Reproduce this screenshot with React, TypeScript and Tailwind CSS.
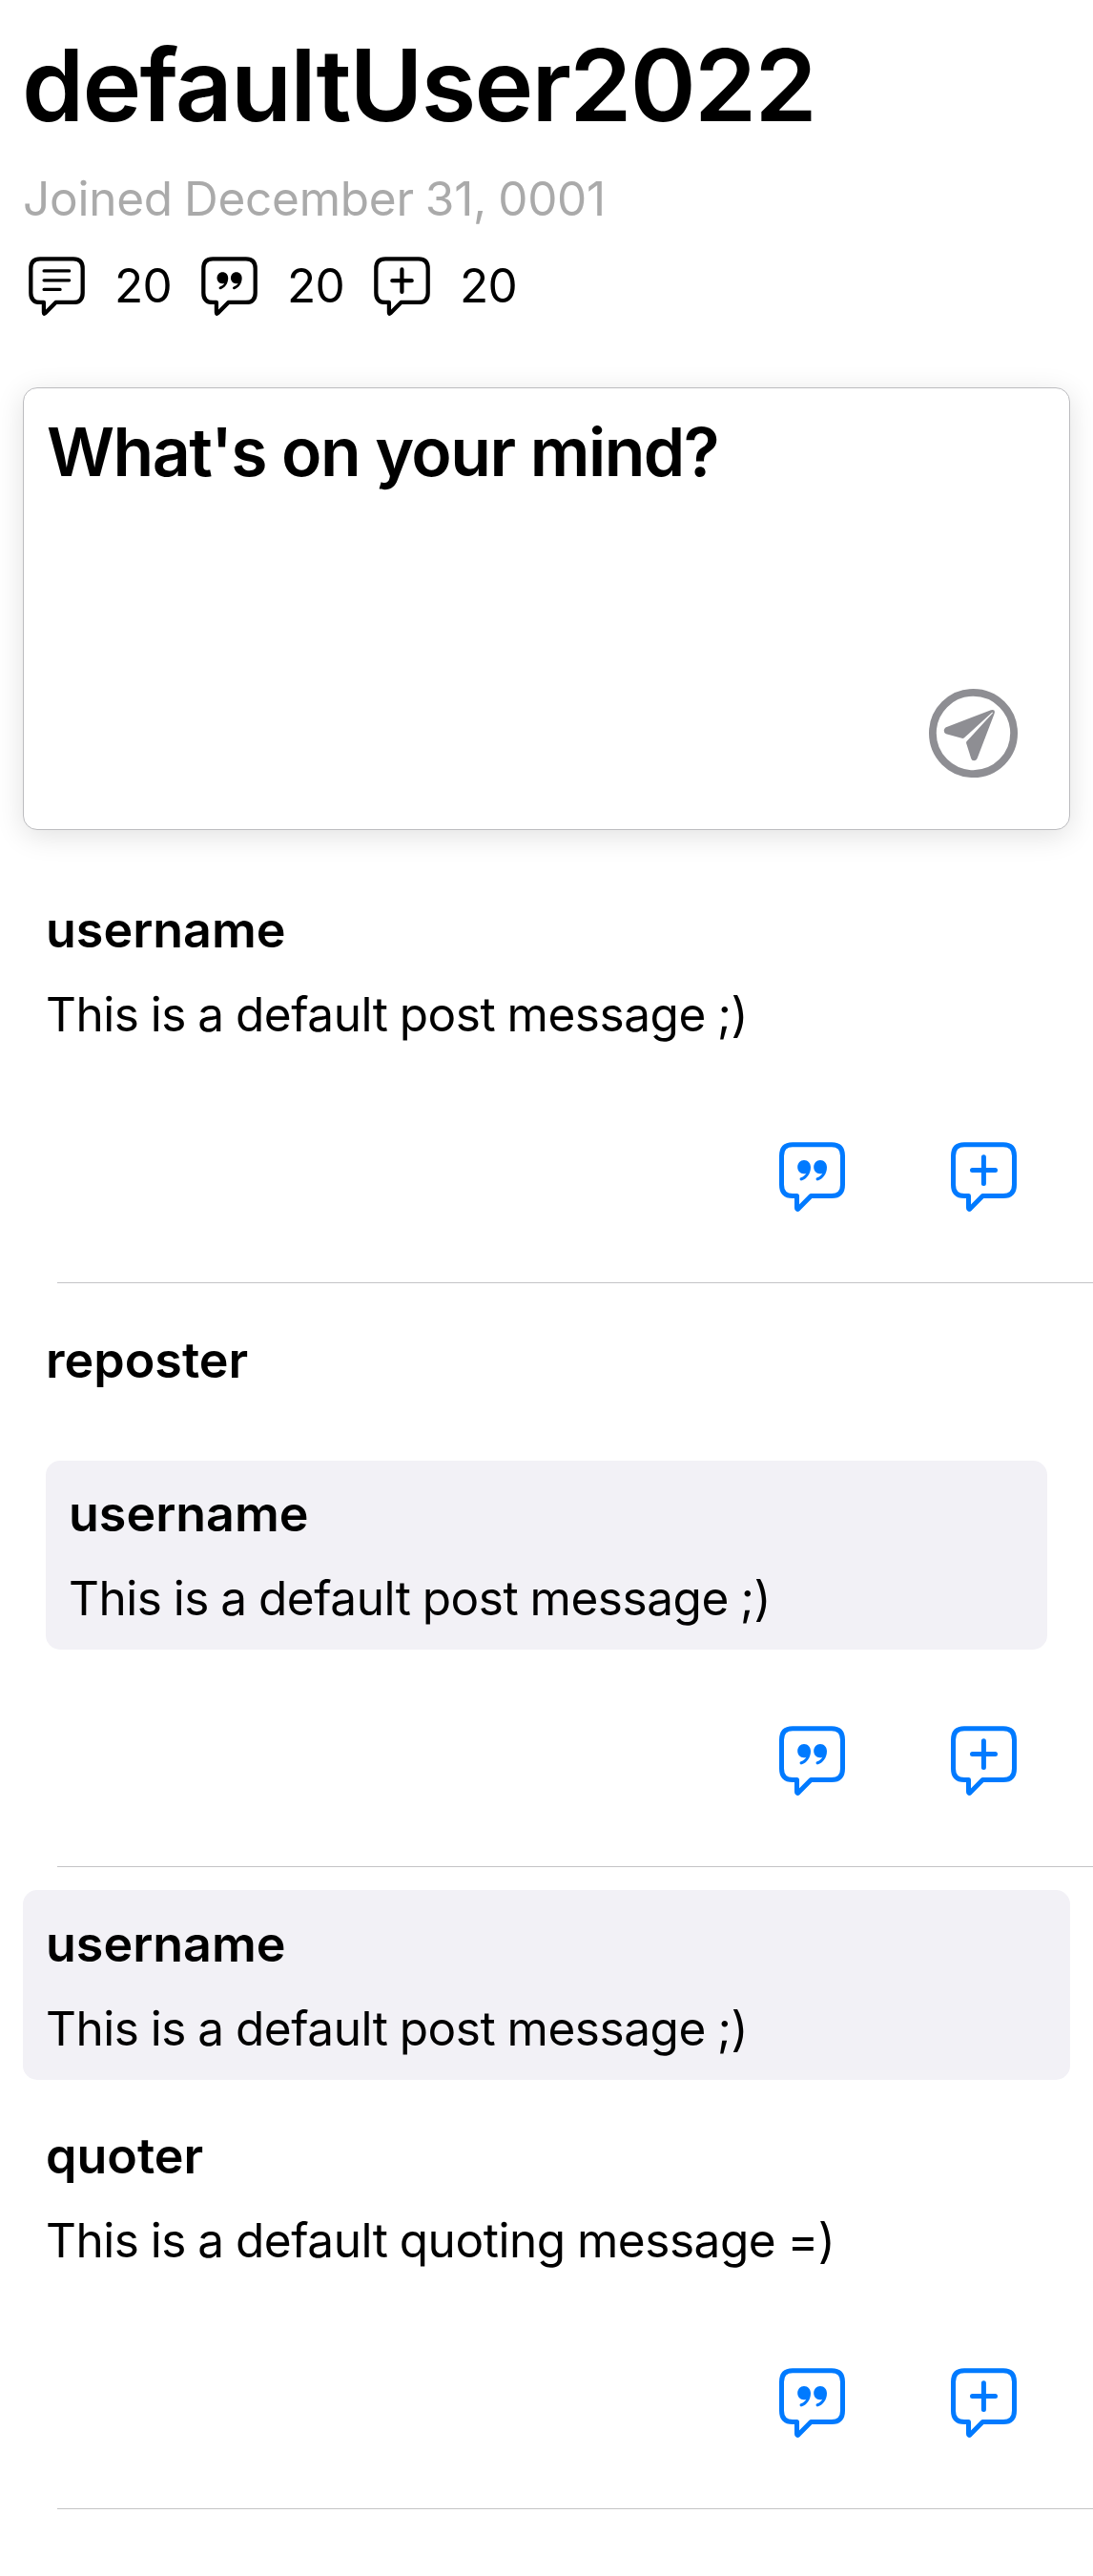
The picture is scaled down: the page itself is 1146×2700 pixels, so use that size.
import React from 'react';

type IconKind = 'text' | 'quote' | 'plus';

function Bubble({ kind, className }: { kind: IconKind; className: string }) {
  return (
    <svg
      viewBox="0 0 69 73"
      className={className}
      fill="none"
      stroke="currentColor"
      strokeWidth="5"
      strokeLinecap="round"
      strokeLinejoin="round"
    >
      <path d="M14 2.7H55Q66.5 2.7 66.5 14.5V44.700Q66.500 56.500 55 56.500H33.300L20.200 69.800Q18.500 71.300 18.500 69V56.500H14Q2.500 56.500 2.500 44.700V14.500Q2.500 2.700 14 2.700Z" />
      {kind === 'text' && <path strokeWidth="3.8" d="M18.7 17.6H50M18.7 29.2H50M18.7 40.6H38.7" />}
      {kind === 'plus' && <path d="M34.4 15.8V43.5M22.500 29.6H46.5" />}
      {kind === 'quote' && (
        <g fill="currentColor" stroke="none">
          <path d="M26 19c4.200 0 7 3.200 7 7.600 0 6.800-4.300 12.200-9.300 13.700-2.200.6-3-2.300-.9-3.100 2.600-1 4.700-2.600 5.500-4.500-.7.4-1.600.6-2.600.6-3.700 0-6.500-3-6.500-7 0-4.200 3-7.300 6.800-7.300Z" />
          <path d="M43 19c4.200 0 7 3.200 7 7.600 0 6.800-4.300 12.200-9.300 13.700-2.200.6-3-2.300-.9-3.100 2.600-1 4.700-2.600 5.500-4.500-.7.4-1.600.6-2.600.6-3.700 0-6.500-3-6.500-7 0-4.200 3-7.300 6.800-7.300Z" />
        </g>
      )}
    </svg>
  );
}

function SendIcon() {
  return (
    <svg viewBox="0 0 93 93" className="size-[93px]">
      <circle cx="46.5" cy="46.5" r="42.6" fill="none" stroke="#8e8e93" strokeWidth="7.8" />
      <path
        fill="#8e8e93"
        d="M18 40.300L65 22.300Q70.200 21 68.500 26.200L50.600 73Q49.500 75.300 47.200 75.300Q44.800 75.200 44.200 73L39.200 57.200Q38.800 55.800 39.800 54.800L67 25.200L66.400 24.600L37 51.300Q36 52.200 34.500 51.800L18 47.200Q15.700 46.500 15.700 43.800Q15.800 41.300 18 40.300Z"
      />
    </svg>
  );
}

function Stat({ kind, value }: { kind: IconKind; value: number }) {
  return (
    <div className="flex w-[181px] items-start gap-[31px]">
      <Bubble kind={kind} className="mt-px h-[62px] w-[59px] shrink-0" />
      <span className="pt-px text-[49.5px] leading-[61px] tracking-[-0.8px]">{value}</span>
    </div>
  );
}

function Entry({ name, message }: { name: string; message?: string }) {
  return (
    <div className="flex flex-col gap-[29px]">
      <h3 className="text-[52px] leading-[59px] font-semibold">{name}</h3>
      {message && <p className="text-[49.5px] leading-[61px] tracking-[-0.45px] [word-spacing:-1.2px]">{message}</p>}
    </div>
  );
}

function Actions() {
  return (
    <div className="flex justify-end gap-[111px] pr-[80px]">
      <button className="text-[#007aff]" aria-label="Quote">
        <Bubble kind="quote" className="h-[73px] w-[69px]" />
      </button>
      <button className="text-[#007aff]" aria-label="Repost">
        <Bubble kind="plus" className="h-[73px] w-[69px]" />
      </button>
    </div>
  );
}

function Divider() {
  return <div className="mt-[74px] ml-[60px] h-px bg-[#c4c4c6]" />;
}

const MESSAGE = 'This is a default post message ;)';

export default function App() {
  return (
    <main className="h-[2700px] w-[1146px] bg-white pt-7 font-['Inter',sans-serif] text-black">
      <header className="px-6">
        <h1 className="-ml-px text-[104.6px] leading-[122px] font-semibold tracking-[-1.75px]">defaultUser2022</h1>
        <p className="mt-7 text-[49.5px] leading-[61px] tracking-[-0.25px] text-[#aaaaaa] [word-spacing:-1.6px]">
          Joined December 31, 0001
        </p>
        <div className="mt-[29px] flex h-[61px] pl-1.5">
          <Stat kind="text" value={20} />
          <Stat kind="quote" value={20} />
          <Stat kind="plus" value={20} />
        </div>
      </header>

      <section className="mx-6 mt-[77px] flex h-[464px] flex-col justify-between rounded-[15px] border border-[#bcbcbf] bg-white pt-[25px] pr-[54px] pb-[54px] pl-6 shadow-[0_6px_30px_rgba(0,0,0,0.12)]">
        <h2 className="text-[69.7px] leading-[84px] font-semibold tracking-[-1.5px]">What's on your mind?</h2>
        <button className="self-end" aria-label="Send">
          <SendIcon />
        </button>
      </section>

      <article className="pt-[75px]">
        <div className="mb-[103px] px-12">
          <Entry name="username" message={MESSAGE} />
        </div>
        <Actions />
        <Divider />
      </article>

      <article className="pt-[51px]">
        <div className="mb-20 px-12">
          <Entry name="reposter" />
          <div className="mt-[76px] rounded-[15px] bg-[#f2f1f6] px-6 pt-[26px] pb-[23px]">
            <Entry name="username" message={MESSAGE} />
          </div>
        </div>
        <Actions />
        <Divider />
      </article>

      <article className="pt-6">
        <div className="mx-6 rounded-[15px] bg-[#f2f1f6] px-6 pt-[27px] pb-[23px]">
          <Entry name="username" message={MESSAGE} />
        </div>
        <div className="mt-[50px] mb-[103px] px-12">
          <Entry name="quoter" message="This is a default quoting message =)" />
        </div>
        <Actions />
        <Divider />
      </article>
    </main>
  );
}
